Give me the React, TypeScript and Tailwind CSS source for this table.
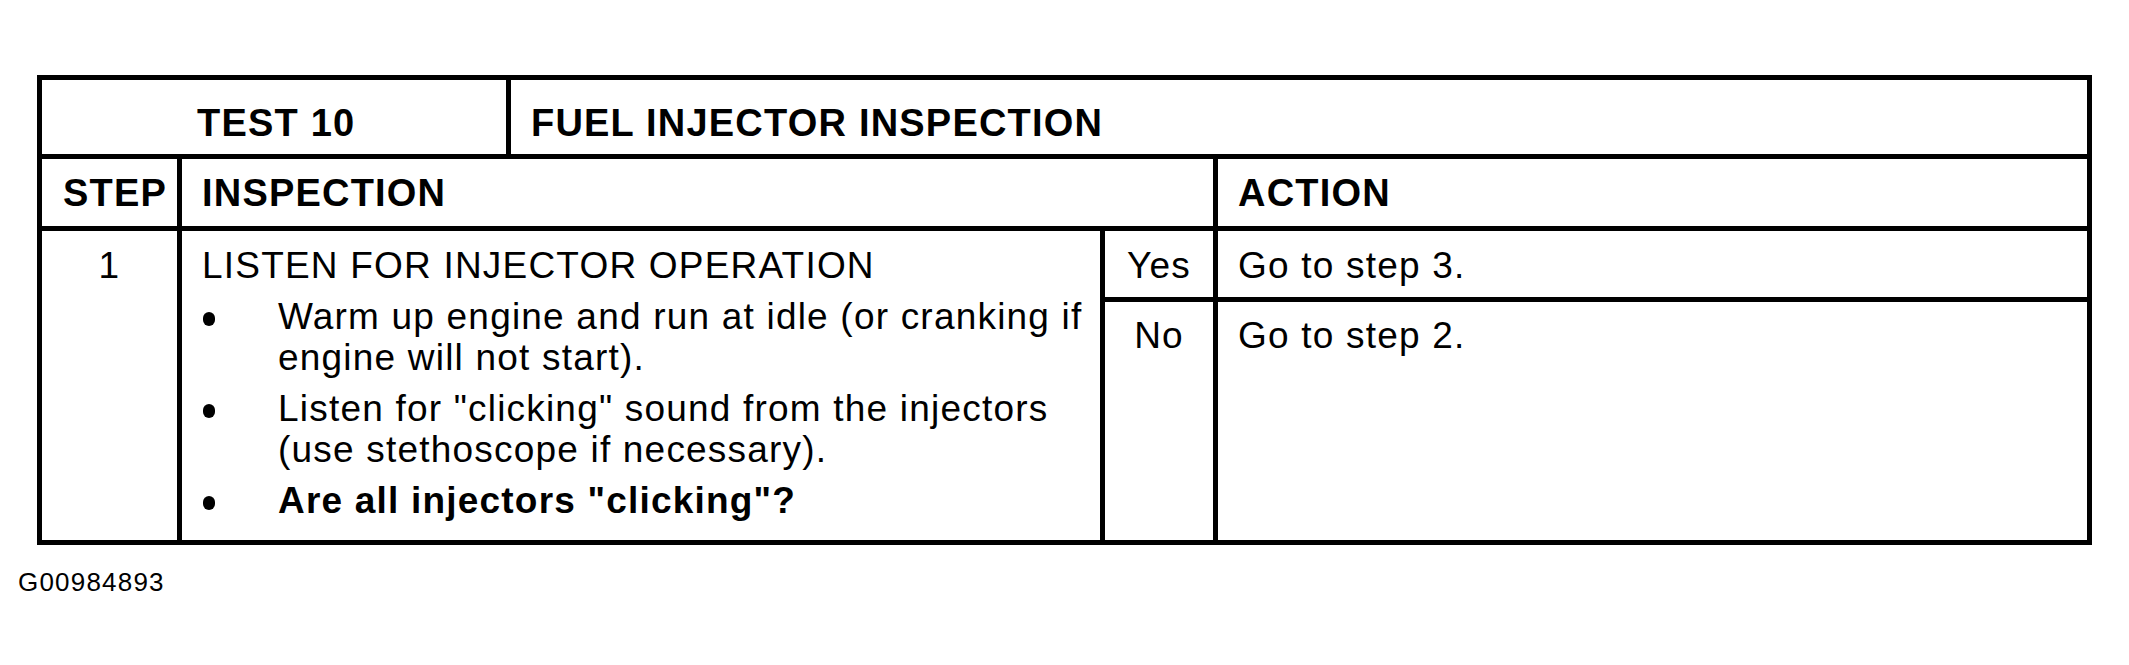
import React from "react";

type Bullet = {
  text: string;
  bold?: boolean;
};

const bullets: Bullet[] = [
  { text: "Warm up engine and run at idle (or cranking if engine will not start)." },
  { text: "Listen for \"clicking\" sound from the injectors (use stethoscope if necessary)." },
  { text: "Are all injectors \"clicking\"?", bold: true },
];

export default function App() {
  return (
    <div className="w-[2129px] h-[665px] bg-white text-black font-['Liberation_Sans',Arial,sans-serif] overflow-hidden">
      <div className="pt-[75px] pl-[37px]">
        {/* table */}
        <div className="w-[2055px] border-[5px] border-black">
          {/* Test title */}
          <div className="flex h-[79px] border-b-[5px] border-black text-[38px] font-bold tracking-[1.2px] leading-[42px]">
            <div className="w-[469px] border-r-[5px] border-black pl-[155px] pt-[22px]">TEST 10</div>
            <div className="flex-1 pl-[20px] pt-[22px]">FUEL INJECTOR INSPECTION</div>
          </div>

          {/* column headers */}
          <div className="flex h-[72px] border-b-[5px] border-black text-[38px] font-bold tracking-[1.2px] leading-[42px]">
            <div className="w-[140px] border-r-[5px] border-black flex items-center pl-[21px]">STEP</div>
            <div className="w-[1036px] border-r-[5px] border-black flex items-center pl-[20px]">INSPECTION</div>
            <div className="flex-1 flex items-center pl-[20px]">ACTION</div>
          </div>

          {/* step 1 */}
          <div className="flex h-[309px] text-[37px] tracking-[1.2px] leading-[41px]">
            <div className="w-[140px] border-r-[5px] border-black pt-[14px] text-center">1</div>
            <div className="w-[923px] border-r-[5px] border-black pt-[14px] pl-[20px] pr-[6px]">
              <div>LISTEN FOR INJECTOR OPERATION</div>
              {bullets.map((b, i) => (
                <div key={i} className="flex mt-[10px]">
                  <div className="w-[76px] shrink-0">
                    <div className="w-[12px] h-[14px] rounded-full bg-black mt-[16px] ml-[1px]" />
                  </div>
                  <div className={b.bold ? "font-bold" : ""}>{b.text}</div>
                </div>
              ))}
            </div>
            <div className="flex-1 flex flex-col">
              <div className="flex h-[71px] border-b-[5px] border-black">
                <div className="w-[113px] border-r-[5px] border-black pt-[14px] text-center">Yes</div>
                <div className="flex-1 pt-[14px] pl-[20px]">Go to step 3.</div>
              </div>
              <div className="flex flex-1">
                <div className="w-[113px] border-r-[5px] border-black pt-[13px] text-center">No</div>
                <div className="flex-1 pt-[13px] pl-[20px]">Go to step 2.</div>
              </div>
            </div>
          </div>
        </div>
      </div>

      <div className="ml-[18px] mt-[22px] text-[26px] leading-[30px] tracking-[1.2px]">G00984893</div>
    </div>
  );
}
